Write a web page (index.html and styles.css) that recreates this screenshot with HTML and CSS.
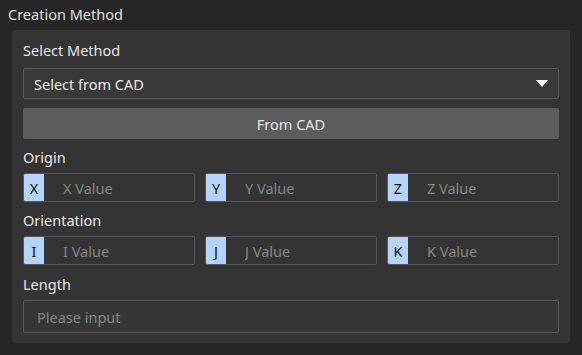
FILE: index.html
```html
<!DOCTYPE html>
<html lang="en">
<head>
  <meta charset="UTF-8">
  <meta name="viewport" content="width=device-width, initial-scale=1.0">
  <title>Creation Method</title>
  <link rel="stylesheet" href="styles.css">
</head>
<body>

  <!-- Section title -->
  <div class="section-title">Creation Method</div>

  <div class="panel">
    <div class="label label-first">Select Method</div>
    <div class="select">
      <span>Select from CAD</span>
      <span class="caret"></span>
    </div>
    <button type="button" class="btn">From CAD</button>

    <div class="label">Origin</div>
    <div class="row">
      <div class="field"><span class="prefix">X</span><input type="text" placeholder="X Value" /></div>
      <div class="field"><span class="prefix">Y</span><input type="text" placeholder="Y Value" /></div>
      <div class="field"><span class="prefix">Z</span><input type="text" placeholder="Z Value" /></div>
    </div>

    <div class="label">Orientation</div>
    <div class="row">
      <div class="field"><span class="prefix">I</span><input type="text" placeholder="I Value" /></div>
      <div class="field"><span class="prefix">J</span><input type="text" placeholder="J Value" /></div>
      <div class="field"><span class="prefix">K</span><input type="text" placeholder="K Value" /></div>
    </div>

    <div class="label label-last">Length</div>
    <input type="text" class="text-input" placeholder="Please input" />
  </div>

</body>
</html>
```

FILE: styles.css
```css
body {
  margin: 0;
  padding: 0;
  background-color: #262626;
  color: #e4e4e4;
  font-family: "Noto Sans", "Open Sans", sans-serif;
  font-size: 14.5px;
}

.section-title {
  height: 30px;
  line-height: 28px;
  padding-left: 8px;
  color: #e0e0e0;
}

.panel {
  margin: 0 12px;
  width: 536px;
  padding: 10px 11px 10px 11px;
  background-color: #343434;
  border-radius: 4px;
}

.label {
  line-height: 20px;
  margin-top: 8px;
  margin-bottom: 6px;
  color: #e8e8e8;
}

.label-first {
  margin-top: 0;
  margin-bottom: 8px;
}

.label-last {
  margin-top: 9px;
}

.select {
  height: 31px;
  box-sizing: border-box;
  border: 1px solid #5a5a5a;
  border-radius: 2px;
  background-color: #393939;
  display: flex;
  align-items: center;
  justify-content: space-between;
  padding: 0 10px;
  color: #ececec;
}

.caret {
  width: 0;
  height: 0;
  border-left: 6px solid transparent;
  border-right: 6px solid transparent;
  border-top: 7px solid #ffffff;
}

.btn {
  display: block;
  width: 100%;
  height: 31px;
  margin-top: 9px;
  border: none;
  border-radius: 2px;
  background-color: #5c5c5c;
  color: #e6e6e6;
  font-family: inherit;
  font-size: 14.5px;
}

.row {
  display: grid;
  grid-template-columns: 1fr 1fr 1fr;
  gap: 10px;
}

.field {
  height: 29px;
  box-sizing: border-box;
  border: 1px solid #555555;
  border-radius: 2px;
  display: flex;
  overflow: hidden;
}

.prefix {
  width: 20px;
  background-color: #b5d4fd;
  color: #111111;
  display: flex;
  align-items: center;
  justify-content: center;
}

.field input {
  flex: 1;
  min-width: 0;
  border: none;
  background: transparent;
  padding: 0 0 0 19px;
  font-family: inherit;
  font-size: 14.5px;
  color: #e0e0e0;
  outline: none;
}

.text-input {
  display: block;
  width: 100%;
  height: 33px;
  box-sizing: border-box;
  border: 1px solid #5a5a5a;
  border-radius: 2px;
  background-color: #363636;
  padding: 0 13px;
  font-family: inherit;
  font-size: 14.5px;
  color: #e0e0e0;
  outline: none;
}

::placeholder {
  color: #878787;
}
```
